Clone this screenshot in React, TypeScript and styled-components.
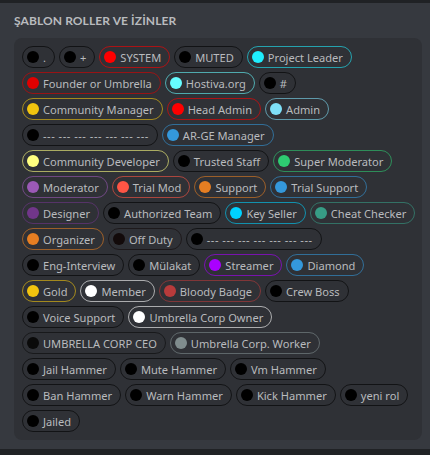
import styled, { createGlobalStyle } from 'styled-components';

const Global = createGlobalStyle`
  html, body { margin: 0; padding: 0; background: #36393f; }
  body { font-family: "Noto Sans", Lato, sans-serif; -webkit-font-smoothing: antialiased; }
`;

const Page = styled.div`
  height: 455px; display: flex; flex-direction: column;
  border-top: 3px solid #202225; border-bottom: 6px solid #202225; box-sizing: border-box;
`;
const Section = styled.div`padding: 10px 8px 0 14px; display: grid; gap: 9px;`;
const Title = styled.h2`
  margin: 0; font-family: Lato, sans-serif; font-size: 12px; font-weight: 700; color: #b9bbbe;
  letter-spacing: 0.1px; line-height: 16px;
`;
const Panel = styled.div`
  background: #2f3136; border-radius: 8px; padding: 8px 6px 8px 8px;
  display: flex; flex-wrap: wrap; gap: 4px;
`;
const Chip = styled.div<{ $c: string }>`
  display: inline-flex; align-items: center; gap: 4px; height: 22px; box-sizing: border-box;
  padding: 0 8px 0 4px; border-radius: 11px; border: 1px solid ${p => p.$c}99;
  color: #b9bbbe; font-size: 11.1px; white-space: nowrap;
`;
const Dot = styled.span<{ $c: string }>`
  width: 12px; height: 12px; border-radius: 50%; background: ${p => p.$c}; flex: none;
`;
const Label = styled.span<{ $dashes?: boolean }>`
  letter-spacing: ${p => (p.$dashes ? '0.5px' : '0')};
`;

const K = '#000000';
const roles: [string, string][] = [
  ['.', K], ['+', K], ['SYSTEM', '#ff0000'], ['MUTED', K], ['Project Leader', '#1feeff'],
  ['Founder or Umbrella', '#e00000'], ['Hostiva.org', '#66fcff'], ['#', K],
  ['Community Manager', '#f1c40f'], ['Head Admin', '#ff0000'], ['Admin', '#7ee0f8'],
  ['--- --- --- --- --- --- ---', K], ['AR-GE Manager', '#3498db'],
  ['Community Developer', '#ffff80'], ['Trusted Staff', K], ['Super Moderator', '#2ecc71'],
  ['Moderator', '#9b59b6'], ['Trial Mod', '#ff5545'], ['Support', '#e67e22'], ['Trial Support', '#3498db'],
  ['Designer', '#71368a'], ['Authorized Team', K], ['Key Seller', '#00d2ff'], ['Cheat Checker', '#379c85'],
  ['Organizer', '#e67e22'], ['Off Duty', '#120a0a'], ['--- --- --- --- --- --- ---', K],
  ['Eng-Interview', K], ['Mülakat', K], ['Streamer', '#aa00ff'], ['Diamond', '#3498db'],
  ['Gold', '#f1c40f'], ['Member', '#ffffff'], ['Bloody Badge', '#b83b3b'], ['Crew Boss', K],
  ['Voice Support', K], ['Umbrella Corp Owner', '#ffffff'],
  ['UMBRELLA CORP CEO', '#0a0a0a'], ['Umbrella Corp. Worker', '#7f8c8d'],
  ['Jail Hammer', K], ['Mute Hammer', K], ['Vm Hammer', K],
  ['Ban Hammer', K], ['Warn Hammer', K], ['Kick Hammer', K], ['yeni rol', K],
  ['Jailed', K],
];

export default function App() {
  return (
    <Page>
      <Global />
      <Section>
        <Title>ŞABLON ROLLER VE İZİNLER</Title>
        <Panel>
          {roles.map(([name, c], i) => (
            <Chip key={i} $c={c}>
              <Dot $c={c} />
              <Label $dashes={name.startsWith('---')}>{name}</Label>
            </Chip>
          ))}
        </Panel>
      </Section>
    </Page>
  );
}
